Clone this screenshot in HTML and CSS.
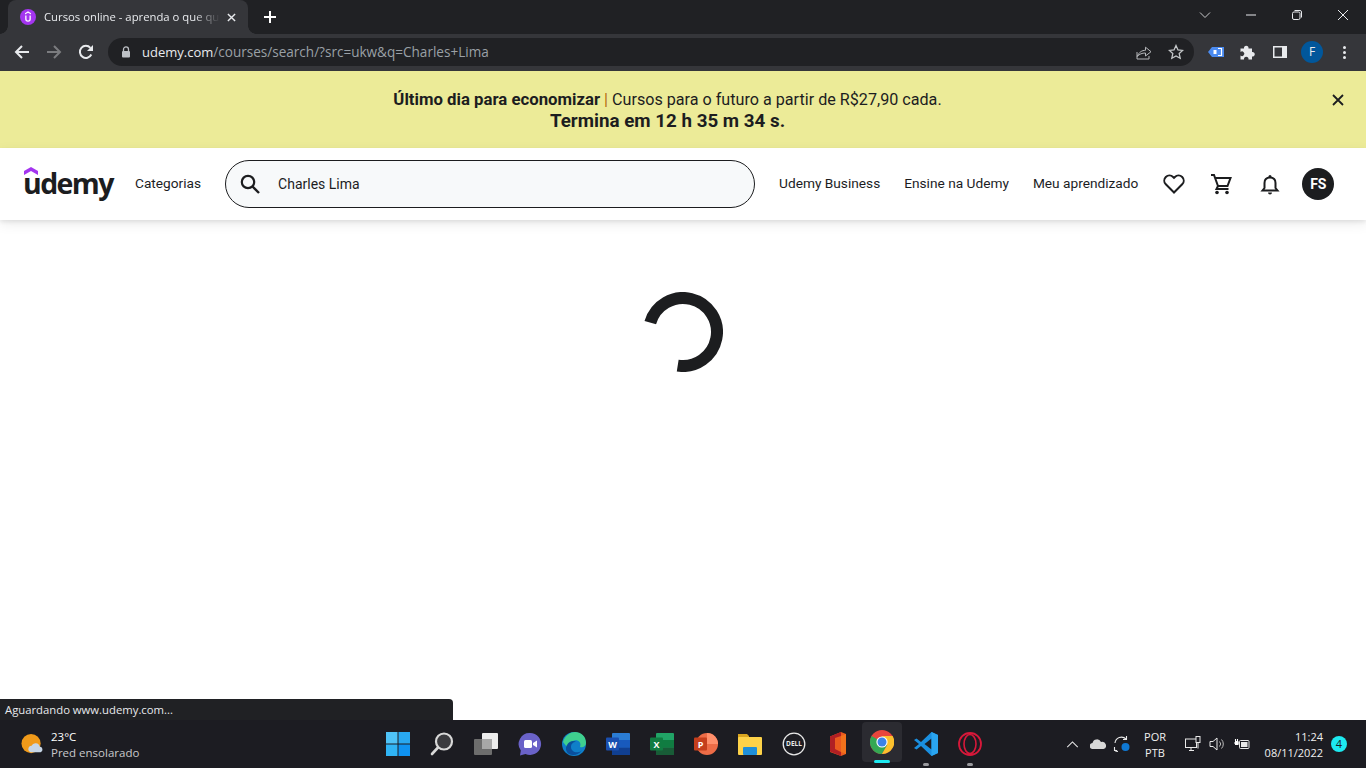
FILE: index.html
```html
<!DOCTYPE html>
<html lang="pt-BR">
<head>
<meta charset="utf-8">
<title>Cursos online - aprenda o que quiser</title>
<link rel="stylesheet" href="styles.css">
</head>
<body>
<div class="screen">
  <div class="tabstrip">
    <div class="tab">
      <svg class="favicon" viewBox="0 0 16 16"><circle cx="8" cy="8" r="8" fill="#a435f0"/><path d="M8 2.300 5 4.200v1.400L8 3.700l3 1.900V4.200z" fill="#fff"/><path d="M5.200 6.600v3.400a2.800 2.800 0 0 0 5.600 0V6.600H9.500v3.300a1.500 1.500 0 0 1-3 0V6.600z" fill="#fff"/></svg>
      <span class="tab-title">Cursos online - aprenda o que quiser</span>
      <svg class="tab-close" viewBox="0 0 10 10"><path d="M1 1l8 8M9 1l-8 8" stroke="#e8eaed" stroke-width="1.600"/></svg>
    </div>
    <svg class="newtab" viewBox="0 0 12 12"><path d="M6 0v12M0 6h12" stroke="#fff" stroke-width="2"/></svg>
    <div class="winctrl">
      <svg viewBox="0 0 12 12" class="wc"><path d="M1 3.500l5 5 5-5" fill="none" stroke="#c8c9cb" stroke-width="1"/></svg>
      <svg viewBox="0 0 12 12" class="wc"><path d="M1 6h10" stroke="#e8eaed" stroke-width="1"/></svg>
      <svg viewBox="0 0 12 12" class="wc"><rect x="1.500" y="3" width="7.500" height="7.500" rx="1.500" fill="none" stroke="#e8eaed"/><path d="M3.500 1.500h5.500a1.500 1.500 0 0 1 1.500 1.500v5.500" fill="none" stroke="#e8eaed"/></svg>
      <svg viewBox="0 0 12 12" class="wc"><path d="M1 1l10 10M11 1L1 11" stroke="#e8eaed" stroke-width="1"/></svg>
    </div>
  </div>

  <div class="toolbar">
    <div class="tb-btn"><svg viewBox="0 0 16 16" class="i16"><path d="M15 8H2M8 2 2 8l6 6" fill="none" stroke="#e8eaed" stroke-width="2"/></svg></div>
    <div class="tb-btn"><svg viewBox="0 0 16 16" class="i16"><path d="M1 8h13M8 2l6 6-6 6" fill="none" stroke="#7b7c7f" stroke-width="2"/></svg></div>
    <div class="tb-btn"><svg viewBox="0 0 16 16" class="i16"><path d="M13.300 10.500A6 6 0 1 1 12.400 3.900" fill="none" stroke="#e8eaed" stroke-width="2"/><path d="M15 1v6H9z" fill="#e8eaed"/></svg></div>
    <div class="omnibox">
      <svg viewBox="0 0 10 12" class="lock"><path d="M2.500 5V3.400a2.500 2.500 0 0 1 5 0V5" fill="none" stroke="#bdc1c6" stroke-width="1.300"/><rect x="1" y="5" width="8" height="6.500" rx="1" fill="#bdc1c6"/></svg>
      <span class="url"><span class="url-host">udemy.com</span>/courses/search/?src=ukw&amp;q=Charles+Lima</span>
      <div class="omni-actions">
        <svg viewBox="0 0 16 16" class="i16"><path d="M1 8v7h12v-3M1.200 12.500C3 8 6 6.300 9.500 6.300V3.200L15 7.700 9.500 12V9C6 9 3.500 10 1.200 12.500z" fill="none" stroke="#b4b6b9" stroke-width="1"/></svg>
        <svg viewBox="0 0 16 16" class="i16"><path d="M8 1.500l2 4.400 4.700.5-3.500 3.200 1 4.700L8 11.900l-4.200 2.400 1-4.700L1.300 6.400 6 5.900z" fill="none" stroke="#c4c7c9" stroke-width="1.300"/></svg>
      </div>
    </div>
    <div class="ext">
      <div class="tb-btn"><svg viewBox="0 0 16 12" class="ext-tag"><path d="M0 6 4 1h12v10H4z" fill="#4b8bf0"/><rect x="5.500" y="4" width="3" height="4" fill="#fff"/><path d="M10 2.500h3.500v7H10" fill="none" stroke="#fff" stroke-width="1.200"/></svg></div>
      <div class="tb-btn"><svg viewBox="0 0 16 16" class="i16"><path d="M0.500 4.500h3.500a2.300 2.300 0 1 1 4.500 0H12v3.500a2.300 2.300 0 1 1 0 4.500V15.500H8.500a2.300 2.300 0 1 0-4.500 0H.5V11.500a2.300 2.300 0 1 0 0-3.500z" fill="#e8eaed"/></svg></div>
      <div class="tb-btn"><svg viewBox="0 0 14 12" class="side"><rect width="14" height="12" fill="#e8eaed"/><rect x="1.500" y="1.500" width="7.500" height="9" fill="#35363a"/></svg></div>
      <div class="tb-btn"><span class="profile">F</span></div>
      <div class="tb-btn"><span class="dots"><i></i><i></i><i></i></span></div>
    </div>
  </div>

  <div class="banner">
    <p class="banner-line"><strong>Último dia para economizar</strong> <span class="pipe">|</span> Cursos para o futuro a partir de R$27,90 cada.</p>
    <p class="banner-timer">Termina em 12 h 35 m 34 s.</p>
    <svg class="banner-close" viewBox="0 0 12 12"><path d="M1 1l10 10M11 1 1 11" stroke="#1c1d1f" stroke-width="1.800"/></svg>
  </div>

  <header class="site-header">
    <div class="logo">
      <svg class="logo-mark" viewBox="0 0 14 8"><path d="M7 0 14 4v4L7 4 0 8V4z" fill="#a435f0"/></svg>
      <span class="logo-text">udemy</span>
    </div>
    <a class="nav-link cat">Categorias</a>
    <div class="search">
      <svg viewBox="0 0 24 24" class="search-icon"><circle cx="10" cy="10" r="6.200" fill="none" stroke="#1c1d1f" stroke-width="2.200"/><path d="M14.500 14.500 21 21" stroke="#1c1d1f" stroke-width="2.400"/></svg>
      <span class="search-text">Charles Lima</span>
    </div>
    <nav class="nav">
      <a class="nav-link">Udemy Business</a>
      <a class="nav-link">Ensine na Udemy</a>
      <a class="nav-link">Meu aprendizado</a>
    </nav>
    <div class="hd-icons">
      <svg viewBox="0 0 24 24" class="hd-icon"><path d="M12 20.500 3.800 12.300a5.200 5.200 0 0 1 0-7.300 5.200 5.200 0 0 1 7.300 0l.9.900.9-.9a5.200 5.200 0 0 1 7.300 0 5.200 5.200 0 0 1 0 7.300z" fill="none" stroke="#1c1d1f" stroke-width="2"/></svg>
      <svg viewBox="0 0 24 24" class="hd-icon"><path d="M1 3h3l4 11h9.500l3-8H5.500M8 14l-1.500 3h12" fill="none" stroke="#1c1d1f" stroke-width="2"/><circle cx="7" cy="20.500" r="1.800" fill="#1c1d1f"/><circle cx="17" cy="20.500" r="1.800" fill="#1c1d1f"/></svg>
      <svg viewBox="0 0 24 24" class="hd-icon"><path d="M4.500 18.500h15l-2-2.500v-5c0-3.200-2-5.500-5.500-5.500S6.500 7.800 6.500 11v5z" fill="none" stroke="#1c1d1f" stroke-width="2"/><circle cx="12" cy="4.500" r="1.500" fill="#1c1d1f"/><path d="M10 20.500h4a2 2 0 0 1-4 0z" fill="#1c1d1f"/></svg>
      <span class="avatar">FS</span>
    </div>
  </header>

  <main class="content">
    <svg class="spinner" viewBox="0 0 80 80"><path d="M7.300 30.600A34 34 0 1 1 34.700 73.600" fill="none" stroke="#1c1d1f" stroke-width="12"/></svg>
  </main>

  <div class="status">Aguardando www.udemy.com...</div>

  <footer class="taskbar">
    <div class="weather">
      <svg viewBox="0 0 24 24" class="weather-icon"><circle cx="10.500" cy="11" r="10" fill="#f09a1a"/><path d="M10 20a3.500 3.500 0 0 1 1-6.800 4.500 4.500 0 0 1 8.500 1 3 3 0 0 1 1 5.800z" fill="#c7d6e6"/></svg>
      <div class="weather-text"><span class="temp">23°C</span><span class="cond">Pred ensolarado</span></div>
    </div>
    <div class="apps">
      <div class="app"><svg viewBox="0 0 24 24" class="app-i"><rect width="11.500" height="11.500" fill="#4fc3f7"/><rect x="12.500" width="11.500" height="11.500" fill="#29a8f0"/><rect y="12.500" width="11.500" height="11.500" fill="#30b4f5"/><rect x="12.500" y="12.500" width="11.500" height="11.500" fill="#0f92f0"/></svg></div>
      <div class="app"><svg viewBox="0 0 24 24" class="app-i"><circle cx="14" cy="9.500" r="8" fill="#3a3a3e" stroke="#d8d8d8" stroke-width="2.200"/><path d="M8 15.500 2 22" stroke="#d8d8d8" stroke-width="2.600" stroke-linecap="round"/></svg></div>
      <div class="app"><svg viewBox="0 0 24 24" class="app-i"><rect x="8" y="1" width="16" height="16" rx="1" fill="#ececec"/><rect x="0" y="7" width="18" height="16" rx="1" fill="#6d6d6d"/><rect x="8" y="7" width="10" height="10" fill="#a8a8a8"/></svg></div>
      <div class="app"><svg viewBox="0 0 24 24" class="app-i"><path d="M12 1a11 11 0 1 1-4.500 21L2 23.500l.8-5A11 11 0 0 1 12 1z" fill="#6a62c8"/><rect x="6" y="8" width="8" height="8" rx="1.500" fill="#fff"/><path d="M15 11l4-2.500v7L15 13z" fill="#fff"/></svg></div>
      <div class="app"><svg viewBox="0 0 24 24" class="app-i"><circle cx="12" cy="12" r="12" fill="#0f7fc9"/><path d="M1 10C3 3 9 0 13 0c6 0 11 4 11 11 0 3-3 5-6 4 2-5-3-8-7-6-3 1-5 3-6 6z" fill="#3fd08f"/><path d="M9 15c0 4 4 6 8 5 1 0 2-1 3-2-3 5-9 6-13 4-3-2-4-6-2-9 2-4 7-5 9-3-3 0-5 2-5 5z" fill="#0a4f9c"/></svg></div>
      <div class="app"><svg viewBox="0 0 24 24" class="app-i"><rect x="6" y="1" width="18" height="22" rx="1" fill="#2b7cd3"/><rect x="6" y="8" width="18" height="7.500" fill="#185abd"/><rect x="6" y="15.500" width="18" height="7.500" fill="#103f91"/><rect x="0" y="5.500" width="13" height="13" rx="1" fill="#1a4fb0"/><text x="6.500" y="15.500" class="mini">W</text></svg></div>
      <div class="app"><svg viewBox="0 0 24 24" class="app-i"><rect x="6" y="1" width="18" height="22" rx="1" fill="#21a366"/><rect x="6" y="8" width="18" height="7.500" fill="#107c41"/><rect x="6" y="15.500" width="18" height="7.500" fill="#185c37"/><rect x="0" y="5.500" width="13" height="13" rx="1" fill="#107c41"/><text x="6.500" y="15.500" class="mini">X</text></svg></div>
      <div class="app"><svg viewBox="0 0 24 24" class="app-i"><circle cx="13" cy="12" r="11" fill="#ed6c47"/><path d="M13 1a11 11 0 0 1 11 11H13z" fill="#ff8f6b"/><rect x="0" y="5.500" width="13" height="13" rx="1" fill="#c43e1c"/><text x="6.500" y="15.500" class="mini">P</text></svg></div>
      <div class="app"><svg viewBox="0 0 24 24" class="app-i"><path d="M0 2h9l2 2h0v4H0z" fill="#d9a520"/><rect y="5" width="24" height="18" rx="1" fill="#fdd249"/><rect x="5" y="15" width="14" height="8" rx="1" fill="#1f8fd8"/></svg></div>
      <div class="app"><svg viewBox="0 0 24 24" class="app-i"><circle cx="12" cy="12" r="10.800" fill="none" stroke="#e8e8e8" stroke-width="1.300"/><text x="12" y="14.400" class="dell">DELL</text></svg></div>
      <div class="app"><svg viewBox="0 0 24 24" class="app-i"><path d="M4 4.500 15 0l5 2v20l-5 2-11-4z" fill="#eb5a1e"/><path d="M4 4.500 15 0v4L9 6v11l6 3v4L4 19.500z" fill="#b01f24"/><path d="M15 4v16l5 2V2z" fill="#f2721c"/></svg></div>
      <div class="app active"><svg viewBox="0 0 24 24" class="app-i"><circle cx="12" cy="12" r="12" fill="#e8453c"/><path d="M12 12 1.600 6A12 12 0 0 0 12 24l5.200-9z" fill="#34a853"/><path d="M12 6h10.600A12 12 0 0 1 12 24l5.200-9z" fill="#fbc02d"/><circle cx="12" cy="12" r="5.600" fill="#fff"/><circle cx="12" cy="12" r="4.500" fill="#3b82e8"/></svg><span class="run run-on"></span></div>
      <div class="app"><svg viewBox="0 0 24 24" class="app-i"><path d="M17.500 0 24 3v18l-6.500 3L7 14l-4.500 3.500L0 16l5-4-5-4 2.500-1.500L7 10z" fill="#1a8fe0"/><path d="M17.500 6.500 10.500 12l7 5.500z" fill="#1c1c22"/><path d="M17.500 0 24 3v18l-6.500 3z" fill="#2aa5f0"/></svg><span class="run"></span></div>
      <div class="app"><svg viewBox="0 0 24 24" class="app-i"><circle cx="12" cy="12" r="11" fill="none" stroke="#d8183a" stroke-width="1.800"/><ellipse cx="12" cy="12" rx="6" ry="9.500" fill="none" stroke="#d8183a" stroke-width="1.600"/></svg><span class="run"></span></div>
    </div>
    <div class="tray">
      <svg viewBox="0 0 14 8" class="tr-chev"><path d="M1 7l6-6 6 6" fill="none" stroke="#e8e8e8" stroke-width="1.200"/></svg>
      <svg viewBox="0 0 16 10" class="tr-cloud"><path d="M3 10a3 3 0 0 1-.5-6A4.500 4.500 0 0 1 11 3a3.500 3.500 0 0 1 2.500 7z" fill="#d8d8d8"/></svg>
      <svg viewBox="0 0 18 18" class="tr-sync"><path d="M2 8a6.500 6.500 0 0 1 11-4M13.500 1v3.500H10M4 15.500h-2.500V12M1.500 15c1 1 2 1.500 3.500 1.500" fill="none" stroke="#e8e8e8" stroke-width="1.100"/><circle cx="12.500" cy="12" r="4" fill="#0f78d4"/></svg>
      <div class="lang"><span>POR</span><span>PTB</span></div>
      <svg viewBox="0 0 16 16" class="tr-i"><rect x=".5" y="3" width="11" height="8.500" fill="none" stroke="#e8e8e8"/><path d="M4 14.500h5M6 11.500v3" stroke="#e8e8e8"/><rect x="11" y=".5" width="4" height="6" fill="#1c1c22" stroke="#e8e8e8"/><path d="M13 6.500v6" stroke="#e8e8e8"/></svg>
      <svg viewBox="0 0 16 16" class="tr-i"><path d="M1 5.500h3L8 2v12l-4-3.500H1z" fill="none" stroke="#e8e8e8"/><path d="M10.500 5.500a3.500 3.500 0 0 1 0 5M12.500 3.500a6.500 6.500 0 0 1 0 9" fill="none" stroke="#bbb"/></svg>
      <svg viewBox="0 0 16 12" class="tr-i tr-batt"><rect x="5.500" y="2.500" width="9.500" height="8" rx="1" fill="none" stroke="#e8e8e8"/><rect x="7" y="4" width="6.500" height="5" fill="#e8e8e8"/><path d="M0 5h5M1.500 1v2M3.500 1v2" stroke="#fff" stroke-width="1.100"/><rect x="1" y="3" width="3.500" height="4" fill="#fff"/></svg>
      <div class="clock"><span>11:24</span><span>08/11/2022</span></div>
      <span class="badge">4</span>
    </div>
  </footer>
</div>
</body>
</html>
```
FILE: styles.css
```css
* { box-sizing: border-box; }
html, body { margin: 0; padding: 0; }
body { background: #fff; font-family: Roboto, "Liberation Sans", sans-serif; }
p { margin: 0; }
svg { display: block; flex: none; }

.screen { position: relative; width: 1366px; height: 768px; overflow: hidden; display: flex; flex-direction: column; }

/* Browser tab strip */
.tabstrip { height: 34px; background: #202124; display: flex; align-items: center; padding-left: 8px; flex: none; }
.tab { position: relative; width: 240px; height: 34px; background: #35363a; border-radius: 8px 8px 0 0; display: flex; align-items: center; padding: 0 12px; }
.tab::before, .tab::after { content: ""; position: absolute; bottom: 0; width: 8px; height: 8px; }
.tab::before { left: -8px; background: radial-gradient(circle at 0 0, #202124 7.500px, #35363a 8px); }
.tab::after { right: -8px; background: radial-gradient(circle at 100% 0, #202124 7.500px, #35363a 8px); }
.favicon { width: 16px; height: 16px; margin-right: 8px; }
.tab-title { font: 11.300px "Open Sans", sans-serif; color: #e8eaed; white-space: nowrap; overflow: hidden; width: 176px; padding-bottom: 2px; -webkit-mask-image: linear-gradient(90deg, #000 150px, transparent 176px); mask-image: linear-gradient(90deg, #000 150px, transparent 176px); }
.tab-close { width: 9px; height: 9px; margin-left: 8px; }
.newtab { width: 12px; height: 12px; margin-left: 16px; }
.winctrl { margin-left: auto; display: flex; height: 34px; align-items: center; padding-right: 17px; gap: 34px; margin-top: -4px; }
.wc { width: 12px; height: 12px; }

/* Toolbar */
.toolbar { height: 37px; background: #35363a; display: flex; align-items: center; padding: 0 6px; flex: none; padding-bottom: 1px; }
.tb-btn { width: 32px; height: 32px; display: flex; align-items: center; justify-content: center; }
.i16 { width: 16px; height: 16px; }
.omnibox { width: 1086px; height: 28px; background: #202124; border-radius: 14px; margin-left: 6px; display: flex; align-items: center; padding-left: 13px; }
.lock { width: 10px; height: 12px; }
.url { font: 13.550px "Open Sans", sans-serif; color: #9aa0a6; margin-left: 11px; white-space: nowrap; }
.url-host { color: #e8eaed; font-size: 13px; }
.omni-actions { margin-left: auto; display: flex; gap: 16px; padding-right: 10px; }
.ext { display: flex; margin-left: 6px; }
.ext-tag { width: 16px; height: 12px; }
.side { width: 14px; height: 12px; }
.profile { width: 22px; height: 22px; border-radius: 50%; background: #01579b; color: #e8eaed; font: 12px/22px "Open Sans", sans-serif; text-align: center; }
.dots { display: flex; flex-direction: column; gap: 2px; }
.dots i { width: 3px; height: 3px; border-radius: 50%; background: #e8eaed; }

/* Promo banner */
.banner { position: relative; height: 77px; background: #eceb98; flex: none; display: flex; flex-direction: column; align-items: center; justify-content: center; color: #1c1d1f; padding: 0 31px 0 0; }
.banner-line { font-size: 16.150px; line-height: 22px; }
.banner-line strong { font-weight: 700; font-size: 16.750px; }
.pipe { color: #b4690e; }
.banner-timer { font-size: 18.800px; font-weight: 700; line-height: 22px; margin-top: -1px; }
.banner-close { position: absolute; left: 1332px; top: 23px; width: 12px; height: 12px; }

/* Site header */
.site-header { position: relative; height: 72px; background: #fff; flex: none; display: flex; align-items: center; padding-left: 24px; box-shadow: 0 2px 4px rgba(0,0,0,.08), 0 4px 12px rgba(0,0,0,.08); color: #1c1d1f; z-index: 1; }
.logo { position: relative; width: 91px; height: 42px; }
.logo-mark { position: absolute; left: 0; top: 4px; width: 14px; height: 8px; }
.logo-text { position: absolute; left: -1px; top: 2px; font: 700 28.500px/36px "Open Sans", sans-serif; letter-spacing: -1.600px; color: #1c1d1f; }
.nav-link { font-size: 13.700px; color: #1c1d1f; white-space: nowrap; padding-bottom: 2px; }
.cat { margin-left: 20px; }
.search { width: 530px; height: 48px; margin-left: 24px; border: 1px solid #1c1d1f; border-radius: 24px; background: #f7f9fa; display: flex; align-items: center; padding-left: 12px; }
.search-icon { width: 24px; height: 24px; }
.search-text { font-size: 14px; margin-left: 16px; color: #1c1d1f; }
.nav { display: flex; gap: 24px; margin-left: 24px; }
.hd-icons { display: flex; align-items: center; gap: 24px; margin-left: 24px; }
.hd-icon { width: 24px; height: 24px; }
.avatar { width: 32px; height: 32px; border-radius: 50%; background: #1c1d1f; color: #fff; font: 700 14px/32px Roboto, sans-serif; text-align: center; margin-left: -4px; }

/* Main */
.content { flex: 1; background: #fff; display: flex; justify-content: center; padding-top: 72px; }
.spinner { width: 80px; height: 80px; }

/* Status bubble */
.status { position: absolute; left: 0; top: 699px; width: 453px; height: 21px; background: #202124; color: #e8eaed; border-radius: 0 4px 0 0; font: 11.300px/21px "Open Sans", sans-serif; padding-left: 5px; z-index: 2; }

/* Taskbar */
.taskbar { height: 48px; background: #1c1c22; flex: none; display: grid; grid-template-columns: 376px 616px 1fr; align-items: center; }
.weather { display: flex; align-items: center; padding-left: 21px; gap: 7px; }
.weather-icon { width: 23px; height: 23px; }
.weather-text { display: flex; flex-direction: column; font: 11.500px/16px "Open Sans", sans-serif; margin-top: 2px; }
.temp { color: #fff; }
.cond { color: #c9c9cc; }
.apps { display: flex; }
.app { position: relative; width: 44px; height: 44px; display: flex; align-items: center; justify-content: center; border-radius: 4px; }
.app.active { width: 40px; height: 40px; margin: 0 2px; background: #2b2b31; }
.app-i { width: 24px; height: 24px; }
.mini { font: 700 9px "Open Sans", sans-serif; fill: #fff; text-anchor: middle; }
.dell { font: 700 6.500px "Open Sans", sans-serif; fill: #e8e8e8; text-anchor: middle; }
.run { position: absolute; left: 50%; bottom: 0; width: 6px; height: 3px; margin-left: -3px; border-radius: 2px; background: #9a9a9e; }
.run-on { width: 16px; margin-left: -8px; background: #1de9f0; bottom: -1px; }
.tray { display: flex; align-items: center; padding-left: 74px; color: #f0f0f0; }
.tr-chev { width: 13px; height: 7px; }
.tr-cloud { width: 16px; height: 10px; margin-left: 11px; }
.tr-sync { width: 18px; height: 18px; margin-left: 7px; }
.lang { display: flex; flex-direction: column; align-items: center; font: 11px/16px "Open Sans", sans-serif; width: 30px; margin-left: 9px; margin-top: 2px; }
.tr-i { width: 16px; height: 16px; margin-left: 8px; }
.lang + .tr-i { margin-left: 15px; }
.tr-batt { height: 12px; margin-left: 9px; }
.clock { display: flex; flex-direction: column; align-items: flex-end; font: 11px/16px "Open Sans", sans-serif; width: 64px; margin-left: 9px; margin-top: 2px; }
.badge { width: 16px; height: 16px; border-radius: 50%; background: #1de9f0; color: #1c1c22; font: 11px/16px "Open Sans", sans-serif; text-align: center; margin-left: 8px; }
```
